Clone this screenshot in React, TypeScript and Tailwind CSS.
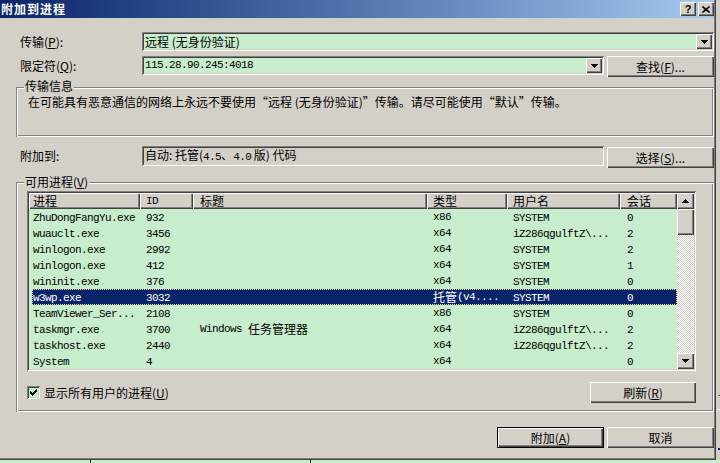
import React from "react";

const F = "font-['Noto_Sans_CJK_SC','Noto_Sans',sans-serif]";
const M = "font-['Liberation_Mono','Noto_Sans_CJK_SC',monospace] text-[11px] tracking-[-0.6px]";

const raised =
  "shadow-[inset_1px_1px_0_#ffffff,inset_-1px_-1px_0_#404040,inset_-2px_-2px_0_#808080]";
const sunken =
  "shadow-[inset_1px_1px_0_#808080,inset_-1px_-1px_0_#ffffff,inset_2px_2px_0_#404040,inset_-2px_-2px_0_#d4d0c8]";
const etched =
  "shadow-[inset_1px_1px_0_#808080,inset_-1px_-1px_0_#ffffff,inset_2px_2px_0_#ffffff,inset_-2px_-2px_0_#808080]";

function DownTri() {
  return (
    <svg width="7" height="4" viewBox="0 0 7 4" shapeRendering="crispEdges">
      <rect x="0" y="0" width="7" height="1" fill="#000" />
      <rect x="1" y="1" width="5" height="1" fill="#000" />
      <rect x="2" y="2" width="3" height="1" fill="#000" />
      <rect x="3" y="3" width="1" height="1" fill="#000" />
    </svg>
  );
}

function UpTri() {
  return (
    <svg width="7" height="4" viewBox="0 0 7 4" shapeRendering="crispEdges">
      <rect x="3" y="0" width="1" height="1" fill="#000" />
      <rect x="2" y="1" width="3" height="1" fill="#000" />
      <rect x="1" y="2" width="5" height="1" fill="#000" />
      <rect x="0" y="3" width="7" height="1" fill="#000" />
    </svg>
  );
}

function U({ children }: { children: React.ReactNode }) {
  return <span className="underline underline-offset-1">{children}</span>;
}

function Btn({
  children,
  w,
  def,
}: {
  children: React.ReactNode;
  w: string;
  def?: boolean;
}) {
  return (
    <div
      className={`${w} h-[21px] flex items-center justify-center bg-[#d4d0c8] leading-[14px] ${
        def
          ? "border border-black shadow-[inset_1px_1px_0_#ffffff,inset_-1px_-1px_0_#404040,inset_-2px_-2px_0_#808080]"
          : raised
      }`}
    >
      {children}
    </div>
  );
}

type RowData = {
  p: string;
  id: string;
  title?: React.ReactNode;
  type: React.ReactNode;
  user: string;
  s: string;
  sel?: boolean;
};

const rows: RowData[] = [
  { p: "ZhuDongFangYu.exe", id: "932", type: "x86", user: "SYSTEM", s: "0" },
  { p: "wuauclt.exe", id: "3456", type: "x64", user: "iZ286qgulftZ\\...", s: "2" },
  { p: "winlogon.exe", id: "2992", type: "x64", user: "SYSTEM", s: "2" },
  { p: "winlogon.exe", id: "412", type: "x64", user: "SYSTEM", s: "1" },
  { p: "wininit.exe", id: "376", type: "x64", user: "SYSTEM", s: "0" },
  {
    p: "w3wp.exe",
    id: "3032",
    type: (
      <>
        <span className="text-[12px]">托管</span>
        <span className={M}>(v4....</span>
      </>
    ),
    user: "SYSTEM",
    s: "0",
    sel: true,
  },
  { p: "TeamViewer_Ser...", id: "2108", type: "x86", user: "SYSTEM", s: "0" },
  {
    p: "taskmgr.exe",
    id: "3700",
    title: (
      <>
        <span className={M}>Windows</span>
        <span className="text-[12px] ml-[6px]">任务管理器</span>
      </>
    ),
    type: "x64",
    user: "iZ286qgulftZ\\...",
    s: "2",
  },
  { p: "taskhost.exe", id: "2440", type: "x64", user: "iZ286qgulftZ\\...", s: "2" },
  { p: "System", id: "4", type: "x64", user: "", s: "0" },
];

function Row({ r }: { r: RowData }) {
  return (
    <div
      className={`h-[16px] ml-[3px] flex items-center leading-[16px] whitespace-nowrap ${
        r.sel
          ? "bg-[#0a246a] text-white outline-1 outline-dotted outline-[#f5db95] -outline-offset-1"
          : ""
      }`}
    >
      <div className="w-[108px] pl-[1px] overflow-hidden">
        <span className={M}>{r.p}</span>
      </div>
      <div className="w-[53px] pl-[6px]">
        <span className={M}>{r.id}</span>
      </div>
      <div className="w-[234px] pl-[7px] flex items-center">{r.title}</div>
      <div className="w-[80px] pl-[6px] flex items-center">
        {typeof r.type === "string" ? <span className={M}>{r.type}</span> : r.type}
      </div>
      <div className="w-[113px] pl-[6px]">
        <span className={M}>{r.user}</span>
      </div>
      <div className="w-[57px] pl-[7px]">
        <span className={M}>{r.s}</span>
      </div>
    </div>
  );
}

function HeadCell({ w, pl, children }: { w: string; pl: string; children: React.ReactNode }) {
  return (
    <div className={`${w} ${pl} h-[16px] flex items-center bg-[#d4d0c8] leading-[14px] ${raised}`}>
      {children}
    </div>
  );
}

export default function App() {
  return (
    <div
      className={`w-[720px] h-[463px] overflow-hidden bg-[#d4d0c8] flex flex-col text-[12px] text-black ${F}`}
    >
      <div className="flex h-[460px]">
        <div className="w-[716px] h-[460px] flex flex-col bg-[#d4d0c8] pr-[2px] pb-[2px] shadow-[inset_-1px_-1px_0_#404040,inset_-2px_-2px_0_#808080]">
          {/* Title bar */}
          <div className="h-[18px] flex items-center bg-linear-to-r from-[#0a246a] to-[#a6caf0] pl-[1px]">
            <span className="text-white font-bold text-[12px] tracking-[1px] leading-[14px]">
              附加到进程
            </span>
            <div className="ml-auto flex gap-[2px]">
              <div
                className={`w-[16px] h-[14px] bg-[#d4d0c8] flex items-center justify-center ${raised}`}
              >
                <span className="font-['Liberation_Sans',sans-serif] font-bold text-[11px] leading-[11px]">
                  ?
                </span>
              </div>
              <div
                className={`w-[16px] h-[14px] bg-[#d4d0c8] flex items-center justify-center ${raised}`}
              >
                <svg width="8" height="7" viewBox="0 0 8 7">
                  <path d="M0.5 0.5L7.5 6.5M7.5 0.5L0.5 6.5" stroke="#000" strokeWidth="1.6" />
                </svg>
              </div>
            </div>
          </div>

          {/* Content */}
          <div className="flex flex-col pl-[16px]">
            {/* Row 1 */}
            <div className="mt-[14px] h-[19px] flex items-center">
              <div className="w-[126px] pl-[4px] leading-[14px]">
                传输(<U>P</U>):
              </div>
              <div
                className={`flex-1 h-[19px] bg-[#c7edcc] ${sunken} flex items-center pl-[3px] pr-[2px]`}
              >
                <span className="leading-[14px]">远程 (无身份验证)</span>
                <div
                  className={`ml-auto w-[16px] h-[15px] bg-[#d4d0c8] flex items-center justify-center ${raised}`}
                >
                  <DownTri />
                </div>
              </div>
            </div>

            {/* Row 2 */}
            <div className="mt-[5px] h-[21px] flex items-start">
              <div className="w-[126px] pl-[4px] h-[19px] flex items-center leading-[14px]">
                限定符(<U>Q</U>):
              </div>
              <div
                className={`w-[462px] h-[19px] bg-[#c7edcc] ${sunken} flex items-center pl-[3px] pr-[2px]`}
              >
                <span className={M}>115.28.90.245:4018</span>
                <div
                  className={`ml-auto w-[16px] h-[15px] bg-[#d4d0c8] flex items-center justify-center ${raised}`}
                >
                  <DownTri />
                </div>
              </div>
              <div className="ml-[3px]">
                <Btn w="w-[107px]">
                  查找(<U>F</U>)...
                </Btn>
              </div>
            </div>

            {/* Group box 1 */}
            <div className={`relative mt-[10px] h-[50px] ${etched} pl-[12px] pt-[9px]`}>
              <span className="absolute top-[-7px] left-[8px] px-[1px] bg-[#d4d0c8] leading-[12px]">
                传输信息
              </span>
              <div className="leading-[12px] whitespace-nowrap">
                在可能具有恶意通信的网络上永远不要使用“远程 (无身份验证)”传输。请尽可能使用“默认”传输。
              </div>
            </div>

            {/* Row 3 */}
            <div className="mt-[9px] h-[22px] flex items-start">
              <div className="w-[126px] pl-[4px] h-[20px] flex items-center leading-[14px]">
                附加到:
              </div>
              <div className={`w-[462px] h-[20px] bg-[#d4d0c8] ${sunken} flex items-center pl-[3px]`}>
                <span className="leading-[14px] whitespace-pre">
                  自动: 托管(<span className={M}>4.5</span>、<span className={M}>4.0</span> 版) 代码
                </span>
              </div>
              <div className="ml-[3px] mt-[1px]">
                <Btn w="w-[107px]">
                  选择(<U>S</U>)...
                </Btn>
              </div>
            </div>

            {/* Group box 2 */}
            <div className={`relative mt-[14px] h-[230px] ${etched} pl-[11px] pt-[9px]`}>
              <span className="absolute top-[-6px] left-[8px] px-[1px] bg-[#d4d0c8] leading-[12px]">
                可用进程(<U>V</U>)
              </span>

              {/* List view */}
              <div className={`w-[669px] h-[180px] bg-[#c7edcc] ${sunken} p-[2px] flex`}>
                <div className="w-[648px] flex flex-col">
                  <div className="h-[16px] flex">
                    <HeadCell w="w-[111px]" pl="pl-[4px]">进程</HeadCell>
                    <HeadCell w="w-[53px]" pl="pl-[6px]">
                      <span className={M}>ID</span>
                    </HeadCell>
                    <HeadCell w="w-[234px]" pl="pl-[7px]">标题</HeadCell>
                    <HeadCell w="w-[80px]" pl="pl-[6px]">类型</HeadCell>
                    <HeadCell w="w-[113px]" pl="pl-[6px]">用户名</HeadCell>
                    <HeadCell w="w-[57px]" pl="pl-[7px]">会话</HeadCell>
                  </div>
                  <div className="flex flex-col">
                    {rows.map((r, i) => (
                      <Row key={i} r={r} />
                    ))}
                  </div>
                </div>
                {/* Scrollbar */}
                <div className="w-[17px] flex flex-col">
                  <div
                    className={`h-[16px] bg-[#d4d0c8] flex items-center justify-center ${raised}`}
                  >
                    <UpTri />
                  </div>
                  <div className={`h-[26px] bg-[#d4d0c8] ${raised}`} />
                  <div className="flex-1 bg-[image:repeating-conic-gradient(#ffffff_0_25%,#d4d0c8_0_50%)] bg-[length:2px_2px]" />
                  <div
                    className={`h-[16px] bg-[#d4d0c8] flex items-center justify-center ${raised}`}
                  >
                    <DownTri />
                  </div>
                </div>
              </div>

              {/* Checkbox row */}
              <div className="mt-[11px] w-[669px] h-[21px] flex items-center">
                <div
                  className={`w-[13px] h-[13px] bg-[#c7edcc] ${sunken} flex items-center justify-center`}
                >
                  <svg width="7" height="7" viewBox="0 0 7 7" shapeRendering="crispEdges">
                    <path
                      d="M0 2h1v1h1v1h1v-1h1v-1h1v-1h1v-1h1v3h-1v1h-1v1h-1v1h-1v1h-1v-1h-1v-1h-1v-1h-1z"
                      fill="#000"
                    />
                  </svg>
                </div>
                <span className="ml-[4px] leading-[14px]">
                  显示所有用户的进程(<U>U</U>)
                </span>
                <div className="ml-auto">
                  <Btn w="w-[106px]">
                    刷新(<U>R</U>)
                  </Btn>
                </div>
              </div>
            </div>

            {/* Bottom buttons */}
            <div className="mt-[15px] flex justify-end gap-[3px]">
              <Btn w="w-[107px]" def>
                附加(<U>A</U>)
              </Btn>
              <Btn w="w-[107px]">取消</Btn>
            </div>
          </div>
        </div>
        {/* Right desktop strip */}
        <div className="w-[4px] flex flex-col bg-[#d4d0c8]">
          <div className="h-[395px]" />
          <div className="h-[1px] ml-[2px] bg-[#8b4a5a]" />
          <div className="h-[13px]" />
          <div className="h-[1px] ml-[2px] bg-white" />
          <div className="h-[38px]" />
          <div className="h-[2px] ml-[2px] bg-[#0a246a]" />
        </div>
      </div>
      {/* Bottom strip */}
      <div className="h-[3px] bg-[#c7edcc] flex">
        <div className="w-[90px]" />
        <div className="w-[1px] bg-[#202020]" />
        <div className="w-[219px]" />
        <div className="w-[1px] bg-[#202020]" />
      </div>
    </div>
  );
}
